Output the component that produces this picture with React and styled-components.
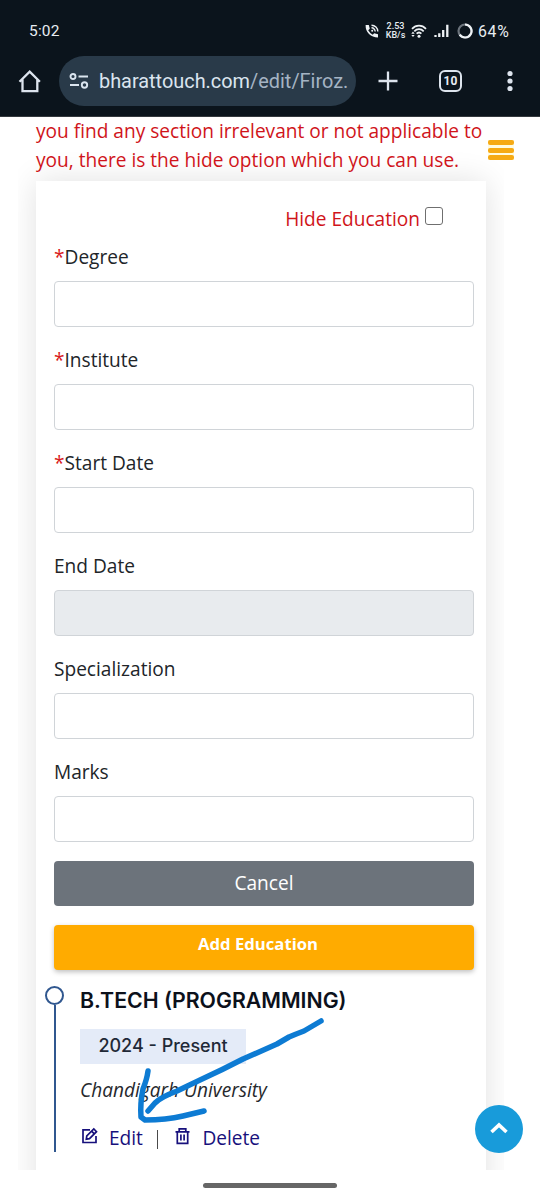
import React from "react";
import styled, { createGlobalStyle } from "styled-components";

const GlobalStyle = createGlobalStyle`
  *, *::before, *::after { box-sizing: border-box; }
  body { margin: 0; background: #fff; font-family: "Open Sans", "Noto Sans", sans-serif; }
`;

const Screen = styled.div`
  position: relative;
  width: 540px;
  height: 1200px;
  overflow: hidden;
  display: flex;
  flex-direction: column;
  background: #fff;
`;

const Chrome = styled.header`
  flex: none;
  height: 117px;
  background: #0b141c;
  border-bottom: 1px solid #34393e;
  color: #e8edf2;
  font-family: Roboto, sans-serif;
`;

const StatusBar = styled.div`
  height: 56px;
  padding: 6px 30px 0 29px;
  display: flex;
  align-items: center;
`;

const Clock = styled.span`
  font-size: 15.5px;
  letter-spacing: 0.2px;
  margin-right: auto;
`;

const StatusIcon = styled.svg`
  flex: none;
  margin-right: ${(p) => p.$gap}px;
`;

const NetSpeed = styled.span`
  width: 19px;
  margin-right: 6px;
  display: flex;
  flex-direction: column;
  align-items: center;
  font: 500 9px/9.5px Roboto, sans-serif;
  white-space: nowrap;
`;

const Battery = styled.span`
  width: 32px;
  font-size: 15.8px;
  letter-spacing: 0.7px;
  white-space: nowrap;
`;

const Toolbar = styled.div`
  height: 50px;
  display: flex;
  align-items: center;
  padding: 0 12px 0 18px;

  & > * { flex-shrink: 0; }
`;

const AddressBar = styled.div`
  width: 297px;
  height: 50px;
  margin: 0 22px 0 17px;
  padding-left: 10px;
  border-radius: 25px;
  background: #293a49;
  display: flex;
  align-items: center;
  gap: 10px;
`;

const Url = styled.span`
  font-size: 19.9px;
  color: #dbe5ef;
  white-space: nowrap;
  padding-top: 1px;
`;

const UrlPath = styled.span`
  color: #a5b4c4;
`;

const TabCount = styled.div`
  width: 23px;
  height: 22px;
  margin: 0 30px 0 41px;
  border: 2px solid #dde4ed;
  border-radius: 6px;
  display: flex;
  align-items: center;
  justify-content: center;
  font: 700 12px/1 Roboto, sans-serif;
`;

const Page = styled.main`
  flex: none;
  height: 1053px;
  overflow: hidden;
  margin: 0 36px 0 18px;
  padding: 0 18px;
`;

const Notice = styled.p`
  position: relative;
  z-index: 1;
  margin: 0;
  height: 64px;
  color: #d0141a;
  font-size: 19.1px;
  line-height: 28.8px;
  white-space: nowrap;
`;

const Card = styled.section`
  width: 450px;
  height: 1020px;
  padding: 22px 12px 0 18px;
  background: #fff;
  box-shadow: 0 0 30px rgba(0, 0, 0, 0.12);
`;

const HideOption = styled.label`
  display: flex;
  justify-content: flex-end;
  gap: 5px;
  height: 32px;
  padding-right: 31px;
  color: #d0141a;
  font-size: 19.1px;
  line-height: 32px;
`;

const Checkbox = styled.input`
  appearance: none;
  width: 18px;
  height: 18px;
  margin: 4px 0 0;
  border: 1px solid #6f6f6f;
  border-radius: 3px;
  background: #fff;
`;

const Field = styled.div`
  height: 103px;
  color: #212529;
`;

const FieldLabel = styled.label`
  display: block;
  height: 46px;
  padding-top: 8px;
  font-size: 19.1px;
  line-height: 28px;
`;

const Required = styled.span`
  color: #d91a20;
`;

const FieldInput = styled.input`
  display: block;
  width: 420px;
  height: 46px;
  border: 1px solid #d0d4d8;
  border-radius: 4px;
  background: ${(p) => (p.disabled ? "#e8ebee" : "#fff")};
`;

const ButtonStack = styled.div`
  display: flex;
  flex-direction: column;
  gap: 19px;
  padding: 7.500px 0 16px;
`;

const Button = styled.button`
  display: block;
  width: 420px;
  height: 45px;
  padding: ${(p) => (p.$primary ? "0 12px 7px 0" : "0")};
  border: 0;
  border-radius: 4px;
  color: #fff;
  background: ${(p) => (p.$primary ? "#ffab00" : "#6c737b")};
  box-shadow: ${(p) => (p.$primary ? "0 2px 5px rgba(0,0,0,0.25)" : "none")};
  font: ${(p) => (p.$primary ? "700 16.7px" : "400 19.1px")} "Open Sans", sans-serif;
`;

const Entry = styled.article`
  display: flex;
  gap: 16px;
  height: 168px;
  margin-left: -9px;
`;

const Timeline = styled.div`
  width: 19px;
  height: 166px;
  display: flex;
  flex-direction: column;
  align-items: center;

  &::before {
    content: "";
    flex: none;
    width: 19px;
    height: 19px;
    border: 2px solid #30578f;
    border-radius: 50%;
  }
  &::after {
    content: "";
    flex: 1;
    width: 2px;
    background: #30578f;
  }
`;

const EntryBody = styled.div`
  color: #26282c;
`;

const EntryTitle = styled.h4`
  margin: 0;
  height: 43px;
  font: 600 21.3px/29px Inter, sans-serif;
  color: #0c111b;
  white-space: nowrap;
`;

const Period = styled.div`
  width: 166px;
  height: 35px;
  background: #e4ebf8;
  color: #1f2937;
  text-align: center;
  font: 500 18px/34px Inter, sans-serif;
`;

const School = styled.em`
  display: block;
  margin-top: 12px;
  font-size: 19.1px;
  line-height: 28px;
  white-space: nowrap;
`;

const Actions = styled.div`
  display: flex;
  align-items: center;
  height: 28px;
  margin-top: 20px;
  font-size: 19.1px;
  color: #222;
`;

const Action = styled.a`
  display: flex;
  align-items: center;
  gap: ${(p) => p.$gap}px;
  color: #17107c;
`;

const ActionIcon = styled.svg`
  flex: none;
  margin-bottom: 3px;
`;

const Divider = styled.span`
  width: 1.5px;
  height: 19px;
  margin: 3px 17px 0 14px;
  background: #4a4a4a;
`;

const MenuButton = styled.div`
  position: absolute;
  z-index: 2;
  left: 488px;
  top: 140px;
  width: 26px;
  height: 20px;
  display: flex;
  flex-direction: column;
  justify-content: space-between;
  background: #fffbe0;
`;

const MenuBar = styled.span`
  height: 5px;
  border-radius: 2px;
  background: #f6aa14;
`;

const ScrollTop = styled.div`
  position: absolute;
  left: 475px;
  top: 1105px;
  width: 48px;
  height: 48px;
  border-radius: 50%;
  background: #189bda;
  display: flex;
  align-items: center;
  justify-content: center;
  padding-bottom: 3px;
`;

const Annotation = styled.svg`
  position: absolute;
  left: 130px;
  top: 1010px;
  pointer-events: none;
`;

const NavArea = styled.footer`
  height: 30px;
  display: flex;
  align-items: center;
  justify-content: center;
`;

const Handle = styled.span`
  width: 134px;
  height: 5px;
  border-radius: 3px;
  background: #666;
`;

const fields = [
  { label: "Degree", required: true },
  { label: "Institute", required: true },
  { label: "Start Date", required: true },
  { label: "End Date", disabled: true },
  { label: "Specialization" },
  { label: "Marks" },
];

function StatusIcons() {
  return (
    <>
      <StatusIcon $gap={7} width="14" height="14" viewBox="0 0 14 14">
        <path d="M.6 1H3.800L4.800 4.800 3.200 6.300Q4.800 9.200 7.700 10.800L9.200 9.200 13 10.200V13.400Q7.500 13.400 4 10T.6 1z" fill="#eef2f5" />
        <path d="M6.500 1.200A6.300 6.300 0 0 1 12.800 7.500M6.500 3.800A3.700 3.700 0 0 1 10.200 7.500" fill="none" stroke="#eef2f5" strokeWidth="1.400" />
        <circle cx="7.200" cy="6.700" r="1" fill="#eef2f5" />
      </StatusIcon>
      <NetSpeed>
        <span>2.53</span>
        <span>KB/s</span>
      </NetSpeed>
      <StatusIcon $gap={7} width="16" height="14" viewBox="0 0 16 14">
        <path d="M1 4.800C5 .6 11 .6 15 4.800M3.300 7.300C6 4.500 10 4.500 12.700 7.300M5.600 9.700C7 8.300 9 8.300 10.400 9.700" fill="none" stroke="#eef2f5" strokeWidth="1.700" />
        <circle cx="8" cy="12.200" r="1.500" fill="#eef2f5" />
        <path d="M.3 9.700L2 7.600l1.700 2.100zM.3 10.900h3.400L2 13z" fill="#eef2f5" />
      </StatusIcon>
      <StatusIcon $gap={8} width="15" height="14" viewBox="0 0 15 14">
        <path d="M1.500 13v-2M5.300 13V9.200M9.200 13V6M13.300 13V.8" stroke="#eef2f5" strokeWidth="2.300" />
      </StatusIcon>
      <StatusIcon $gap={5} width="16" height="16" viewBox="0 0 16 16">
        <circle cx="8" cy="8" r="6.500" fill="none" stroke="#6b737b" strokeWidth="2.200" />
        <path d="M8 1.500A6.500 6.500 0 1 1 2.700 11.700" fill="none" stroke="#eef2f5" strokeWidth="2.200" />
      </StatusIcon>
    </>
  );
}

function BrowserChrome() {
  return (
    <Chrome>
      <StatusBar>
        <Clock>5:02</Clock>
        <StatusIcons />
        <Battery>64%</Battery>
      </StatusBar>
      <Toolbar>
        <svg width="24" height="24" viewBox="0 0 24 24" fill="none" stroke="#dde4ed" strokeWidth="2.300">
          <path d="M1.500 12.800L11.700 2.600l10.200 10.200M4.500 10.500v11.600h14.800V10.500" />
        </svg>
        <AddressBar>
          <svg width="20" height="16" viewBox="0 0 20 16" fill="none" stroke="#dbe5ef" strokeWidth="1.900">
            <circle cx="4" cy="3.500" r="2.500" />
            <path d="M9.500 3.500H19M1 12h9" />
            <circle cx="15.500" cy="12" r="2.700" />
          </svg>
          <Url>bharattouch.com<UrlPath>/edit/Firoz.</UrlPath></Url>
        </AddressBar>
        <svg width="20" height="20" viewBox="0 0 20 20" stroke="#dde4ed" strokeWidth="2.300">
          <path d="M10 .5v19M.5 10h19" />
        </svg>
        <TabCount>10</TabCount>
        <svg width="36" height="22" viewBox="0 0 36 22" fill="#dde4ed">
          <circle cx="18" cy="3.500" r="2.600" />
          <circle cx="18" cy="11" r="2.600" />
          <circle cx="18" cy="18.500" r="2.600" />
        </svg>
      </Toolbar>
    </Chrome>
  );
}

export default function App() {
  return (
    <Screen>
      <GlobalStyle />
      <BrowserChrome />
      <Page>
        <Notice>
          you find any section irrelevant or not applicable to
          <br />
          you, there is the hide option which you can use.
        </Notice>
        <Card>
          <HideOption>
            Hide Education
            <Checkbox type="checkbox" />
          </HideOption>
          <div>
            {fields.map((f) => (
              <Field key={f.label}>
                <FieldLabel>
                  {f.required && <Required>*</Required>}
                  {f.label}
                </FieldLabel>
                <FieldInput disabled={f.disabled} />
              </Field>
            ))}
          </div>
          <ButtonStack>
            <Button>Cancel</Button>
            <Button $primary>Add Education</Button>
          </ButtonStack>
          <Entry>
            <Timeline />
            <EntryBody>
              <EntryTitle>B.TECH (PROGRAMMING)</EntryTitle>
              <Period>2024 - Present</Period>
              <School>Chandigarh University</School>
              <Actions>
                <Action $gap={11}>
                  <ActionIcon width="18" height="18" viewBox="0 0 18 18" fill="none" stroke="#17107c" strokeWidth="1.700">
                    <path d="M10 2.800H3v12.700h13V9" />
                    <path d="M6.300 12.200l.5-3.200L13.800 2l2.700 2.700L9.500 11.700zM11.600 4.200l2.700 2.700" />
                  </ActionIcon>
                  Edit
                </Action>
                <Divider />
                <Action $gap={12}>
                  <ActionIcon width="15" height="18" viewBox="0 0 15 18" fill="none" stroke="#17107c" strokeWidth="1.700">
                    <path d="M.5 4.800h14M4.200 4.800V1.800h6.600v3M2.300 4.800v11.500h10.400V4.800M5.900 7.500v6M9.100 7.500v6" />
                  </ActionIcon>
                  Delete
                </Action>
              </Actions>
            </EntryBody>
          </Entry>
        </Card>
      </Page>
      <NavArea>
        <Handle />
      </NavArea>
      <MenuButton>
        <MenuBar />
        <MenuBar />
        <MenuBar />
      </MenuButton>
      <Annotation width="200" height="120" viewBox="130 1010 200 120" fill="none" stroke="#0d7bd3" strokeWidth="5.500" strokeLinecap="round" strokeLinejoin="round">
        <path d="M321 1021L304 1031Q296 1034 289 1037L277 1044L243 1059Q222 1070 200 1080L177 1091Q161 1097 155 1103L148 1111" />
        <path d="M148 1071Q147 1079 143 1089Q140 1103 141 1117L145 1120Q166 1120 183 1116L204 1111" />
      </Annotation>
      <ScrollTop>
        <svg width="18" height="12" viewBox="0 0 18 12" fill="none" stroke="#fff" strokeWidth="3.600">
          <path d="M1.500 10L9 3l7.500 7" />
        </svg>
      </ScrollTop>
    </Screen>
  );
}
